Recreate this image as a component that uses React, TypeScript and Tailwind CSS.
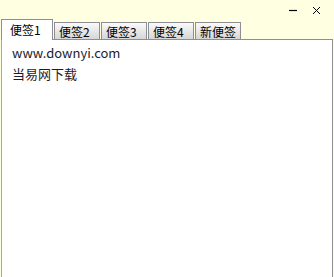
const TABS = ["便签2", "便签3", "便签4", "新便签"];

const FONT = "font-['Noto_Sans_CJK_SC','Liberation_Sans',sans-serif]";

export default function App() {
  return (
    <div className={`w-[334px] h-[277px] overflow-hidden bg-[#ffffe1] flex flex-col ${FONT}`}>
      {/* window controls */}
      <div className="h-[19px] flex justify-end items-center gap-[14px] pr-[13px] pt-[1px]">
        <svg width="10" height="10" viewBox="0 0 10 10">
          <path d="M1 5.5h8" stroke="#000" strokeWidth="1.2" />
        </svg>
        <svg width="9" height="9" viewBox="0 0 9 9">
          <path d="M1 1l7 7M8 1l-7 7" stroke="#000" strokeWidth="1" />
        </svg>
      </div>

      {/* tab strip */}
      <div className="flex items-end pl-[1px] gap-[1px] relative z-10">
        <div className="w-[52px] h-[21px] -mb-px border border-b-0 border-[#8e8e94] bg-white text-[12px] leading-[19px] text-black pl-[8px]">
          便签1
        </div>
        {TABS.map((t) => (
          <div
            key={t}
            className="w-[46px] h-[17px] border border-b-0 border-[#8e8e94] bg-gradient-to-b from-[#fafafa] to-[#d6d6d6] text-[12px] leading-[17px] text-black pl-[4px]"
          >
            {t}
          </div>
        ))}
      </div>

      {/* note body */}
      <div className="flex-1 ml-[1px] mr-[1px] border-t border-l border-r border-[#8e8e94] border-l-[#a8ad84] bg-white px-[10px] pt-[2px] text-[13px] text-[#1c1c2c]">
        <div className="leading-[21px]">www.downyi.com</div>
        <div className="leading-[21px]">当易网下载</div>
      </div>
    </div>
  );
}
